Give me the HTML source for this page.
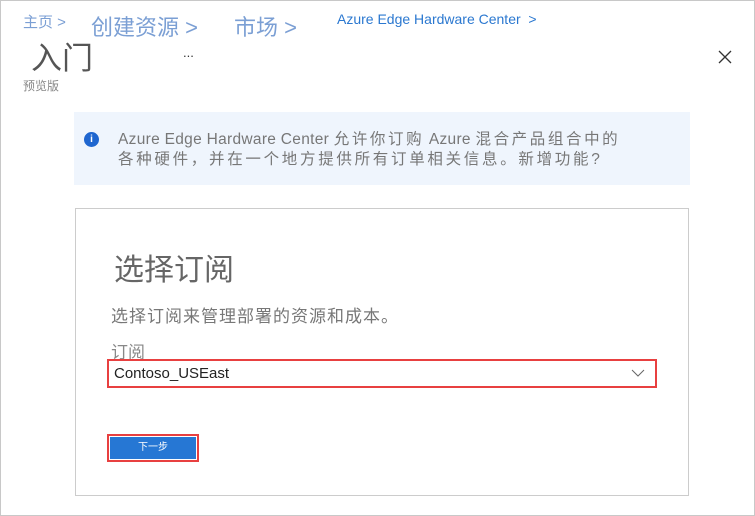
<!DOCTYPE html>
<html><head><meta charset="utf-8"><style>
*{margin:0;padding:0;box-sizing:border-box}
body{width:755px;height:516px;background:#fff;position:relative;overflow:hidden;font-family:"Liberation Sans","Noto Sans CJK SC",sans-serif;border:1px solid #c8c8c8}
.a{position:absolute;white-space:nowrap}
.c1{letter-spacing:2.6px}
</style></head><body>
<div class="a" style="left:22px;top:10px;font-size:15px;color:#7b9fd4">主页 &gt;</div>
<div class="a" style="left:90px;top:9px;font-size:22px;color:#7b9fd4">创建资源 &gt;</div>
<div class="a" style="left:233px;top:9px;font-size:22px;color:#7b9fd4">市场 &gt;</div>
<div class="a" style="left:336px;top:10px;font-size:14px;color:#2b78d0">Azure Edge Hardware Center &nbsp;&gt;</div>
<div class="a" style="left:30px;top:40px;font-size:31px;color:#555;line-height:36px">入门</div>
<div class="a" style="left:22px;top:76px;font-size:12px;color:#888">预览版</div>
<div class="a" style="left:182px;top:44px;font-size:13px;color:#333">...</div>
<svg class="a" style="left:716px;top:48px" width="16" height="16"><path d="M2 2L14 14M14 2L2 14" stroke="#333" stroke-width="1.3"/></svg>
<div class="a" style="left:73px;top:111px;width:616px;height:73px;background:#eff5fd"></div>
<div class="a" style="left:83px;top:131px;width:15px;height:15px;border-radius:50%;background:#1f66cf;color:#fff;font-size:10px;font-weight:bold;text-align:center;line-height:15px">i</div>
<div class="a" style="left:117px;top:129px;font-size:15.5px;color:#777;line-height:20px;letter-spacing:0.3px">Azure Edge Hardware Center <span class="c1">允许你订购</span> Azure <span class="c1">混合产品组合中的</span><br><span style="letter-spacing:2.7px">各种硬件，并在一个地方提供所有订单相关信息。新增功能?</span></div>
<div class="a" style="left:74px;top:207px;width:614px;height:288px;border:1px solid #ccc"></div>
<div class="a" style="left:113px;top:244px;font-size:30px;color:#666">选择订阅</div>
<div class="a" style="left:110px;top:301px;font-size:17px;color:#777;letter-spacing:1px">选择订阅来管理部署的资源和成本。</div>
<div class="a" style="left:110px;top:337px;font-size:17px;color:#888">订阅</div>
<div class="a" style="left:106px;top:358px;width:550px;height:29px;border:2px solid #e84040;background:#fff"></div>
<div class="a" style="left:113px;top:364px;font-size:15px;color:#222">Contoso_USEast</div>
<svg class="a" style="left:630px;top:367px" width="14" height="10"><path d="M1 2L7 8L13 2" stroke="#666" fill="none" stroke-width="1"/></svg>
<div class="a" style="left:106px;top:433px;width:92px;height:28px;border:2px solid #e84040;padding:1px"><div style="background:#2677d4;width:100%;height:100%;color:#fff;font-size:10px;text-align:center;line-height:22px">下一步</div></div>
</body></html>
